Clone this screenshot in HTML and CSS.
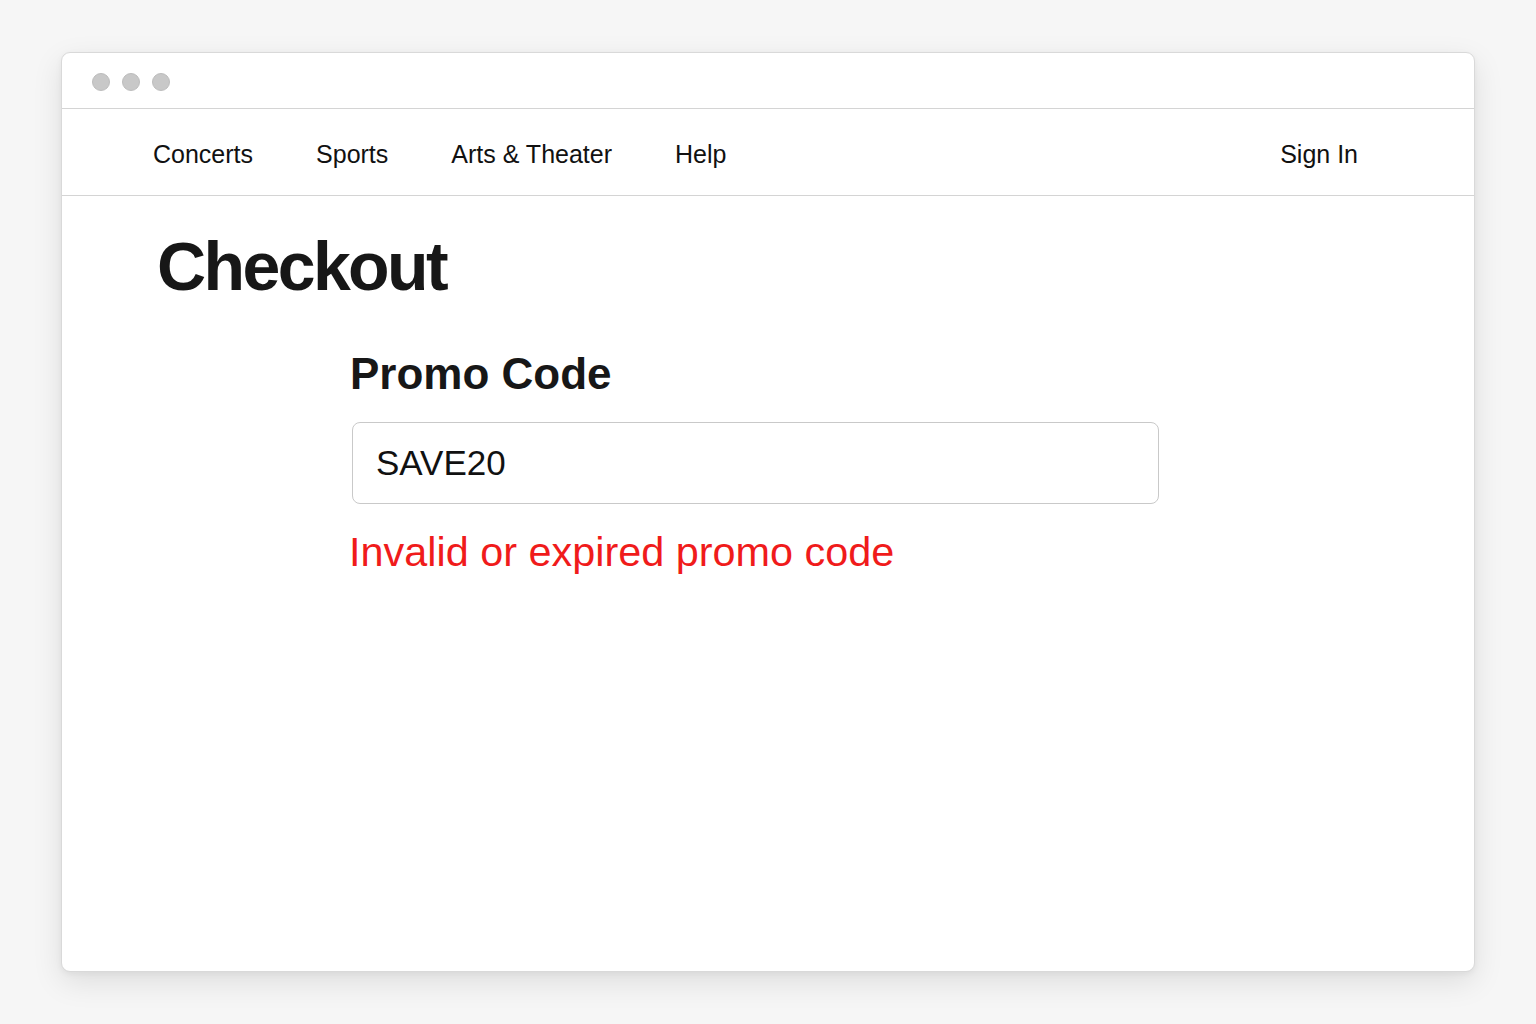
FILE: index.html
```html
<!DOCTYPE html>
<html lang="en">
<head>
<meta charset="utf-8">
<title>Checkout</title>
<link rel="stylesheet" href="styles.css">
</head>
<body>
<div class="window">
  <div class="titlebar">
    <span class="dot"></span><span class="dot"></span><span class="dot"></span>
  </div>
  <nav class="nav">
    <div class="nav-links">
      <a class="nav-link" href="#">Concerts</a>
      <a class="nav-link" href="#">Sports</a>
      <a class="nav-link" href="#">Arts &amp; Theater</a>
      <a class="nav-link" href="#">Help</a>
    </div>
    <a class="nav-link" href="#">Sign In</a>
  </nav>
  <main class="content">
    <h1 class="title">Checkout</h1>
    <section class="promo">
      <h2 class="promo-title">Promo Code</h2>
      <input class="promo-input" type="text" value="SAVE20">
      <p class="promo-error">Invalid or expired promo code</p>
    </section>
  </main>
</div>
</body>
</html>
```

FILE: styles.css
```css
* { box-sizing: border-box; }
html, body { margin: 0; padding: 0; }
body {
  background: #f6f6f6;
  font-family: "Liberation Sans", Arial, sans-serif;
  color: #111;
  padding: 52px 61px;
  height: 1024px;
}
.window {
  width: 1414px;
  height: 920px;
  background: #fff;
  border: 1px solid #d9d9d9;
  border-radius: 9px;
  box-shadow: 0 10px 30px rgba(0,0,0,0.10), 0 2px 6px rgba(0,0,0,0.05);
  overflow: hidden;
}
.titlebar {
  height: 56px;
  border-bottom: 1px solid #d4d4d4;
  display: flex;
  align-items: center;
  gap: 12px;
  padding-left: 30px;
  padding-top: 2px;
}
.dot {
  width: 18px;
  height: 18px;
  border-radius: 50%;
  background: #c8c8c8;
  border: 1px solid #bdbdbd;
}
.nav {
  height: 87px;
  border-bottom: 1px solid #d4d4d4;
  display: flex;
  align-items: center;
  justify-content: space-between;
  padding: 5px 116px 0 91px;
}
.nav-links {
  display: flex;
  gap: 63px;
}
.nav-link {
  font-size: 25px;
  color: #111;
  text-decoration: none;
  line-height: 1;
}
.content {
  padding: 36px 0 0 95px;
}
.title {
  margin: 0;
  font-size: 68px;
  line-height: 1;
  font-weight: 700;
  letter-spacing: -2.6px;
  color: #171717;
}
.promo {
  margin-left: 193px;
  padding-top: 52px;
}
.promo-title {
  margin: 0;
  font-size: 44px;
  line-height: 1;
  font-weight: 700;
  color: #171717;
}
.promo-input {
  display: block;
  margin: 26px 0 0 2px;
  width: 807px;
  height: 82px;
  border: 1px solid #c9c9c9;
  border-radius: 8px;
  padding: 0 0 0 23px;
  font-family: "Liberation Sans", Arial, sans-serif;
  font-size: 35px;
  color: #111;
  background: #fff;
  outline: none;
}
.promo-error {
  margin: 28px 0 0 -1px;
  font-size: 41.4px;
  line-height: 1;
  color: #f01b1b;
}
```
